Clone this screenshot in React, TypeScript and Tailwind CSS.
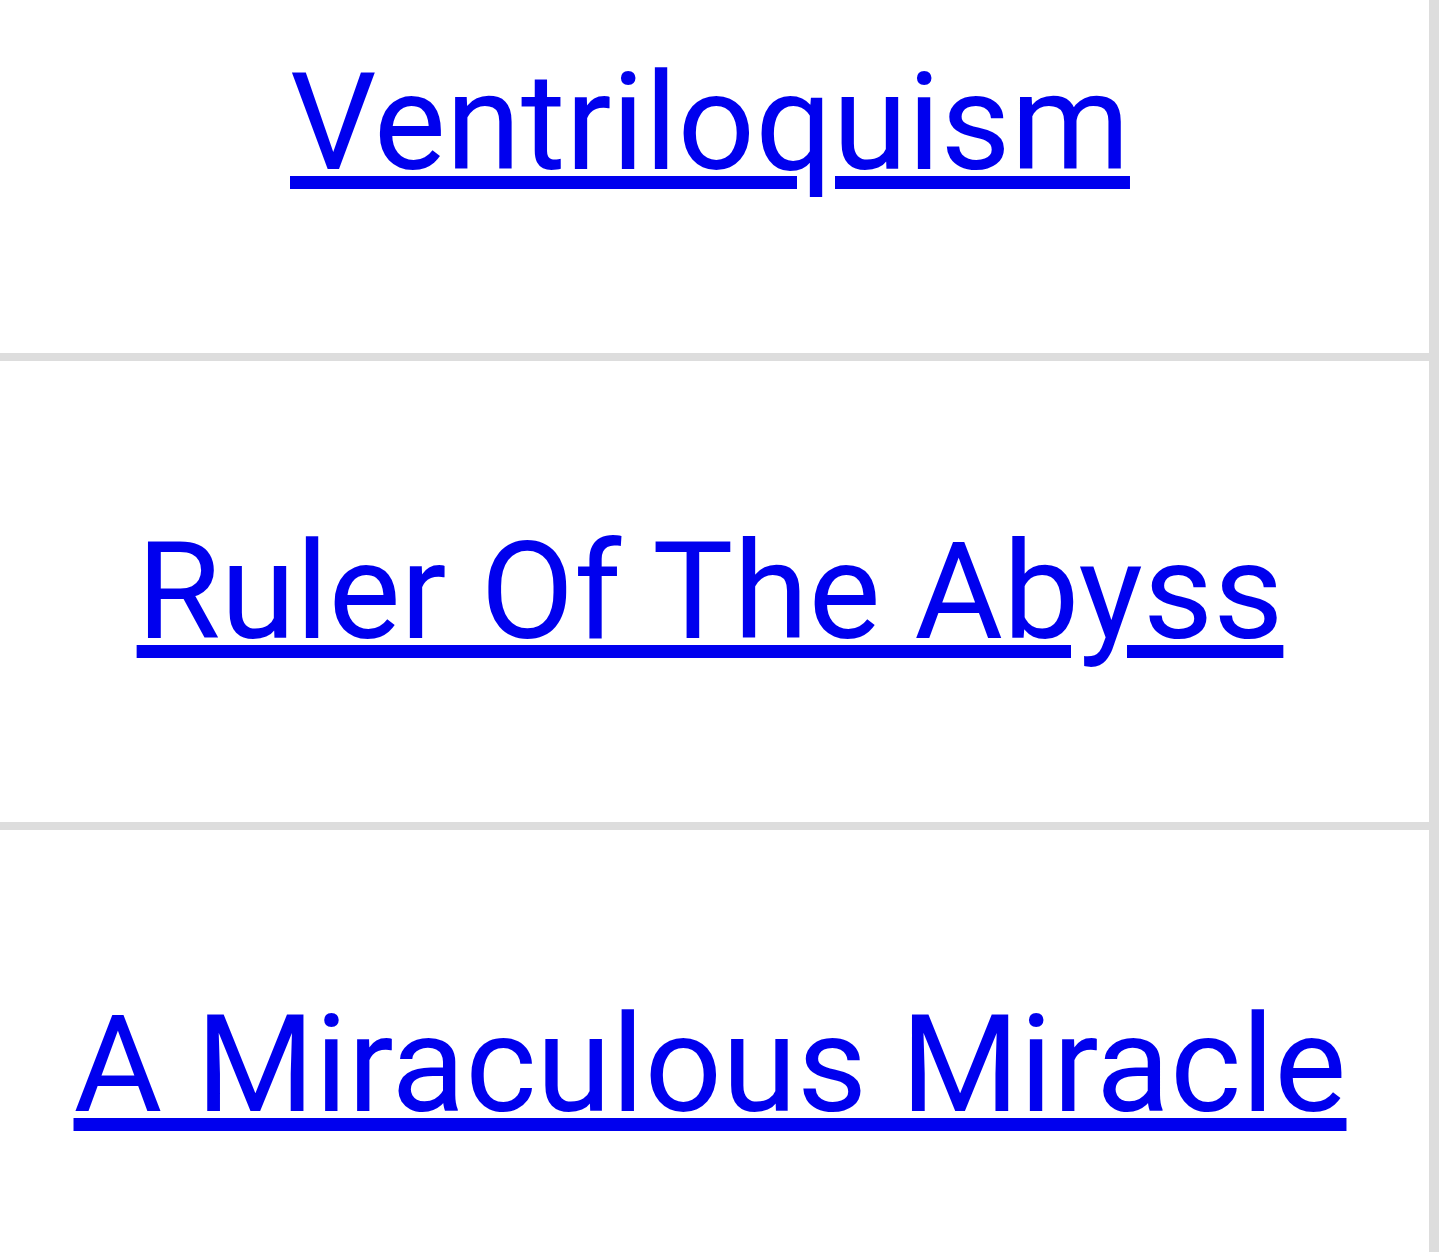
export default function App() {
  const items = ["Ventriloquism", "Ruler Of The Abyss", "A Miraculous Miracle"];
  return (
    <div className="w-[1440px] h-[1252px] overflow-hidden bg-white" style={{ fontFamily: "Roboto, 'Noto Sans', sans-serif" }}>
      <div className="mt-[-108px] w-[1439px] border-r-[10px] border-[#dddddd]">
        {items.map((t, i) => (
          <div key={t} className={`h-[469px] pr-[9px] flex items-center justify-center ${i < items.length - 1 ? "border-b-[8px] border-[#dddddd]" : ""}`}>
            <a href="#" className="text-[136px] leading-none text-[#0000ee] underline whitespace-nowrap">{t}</a>
          </div>
        ))}
      </div>
    </div>
  );
}
